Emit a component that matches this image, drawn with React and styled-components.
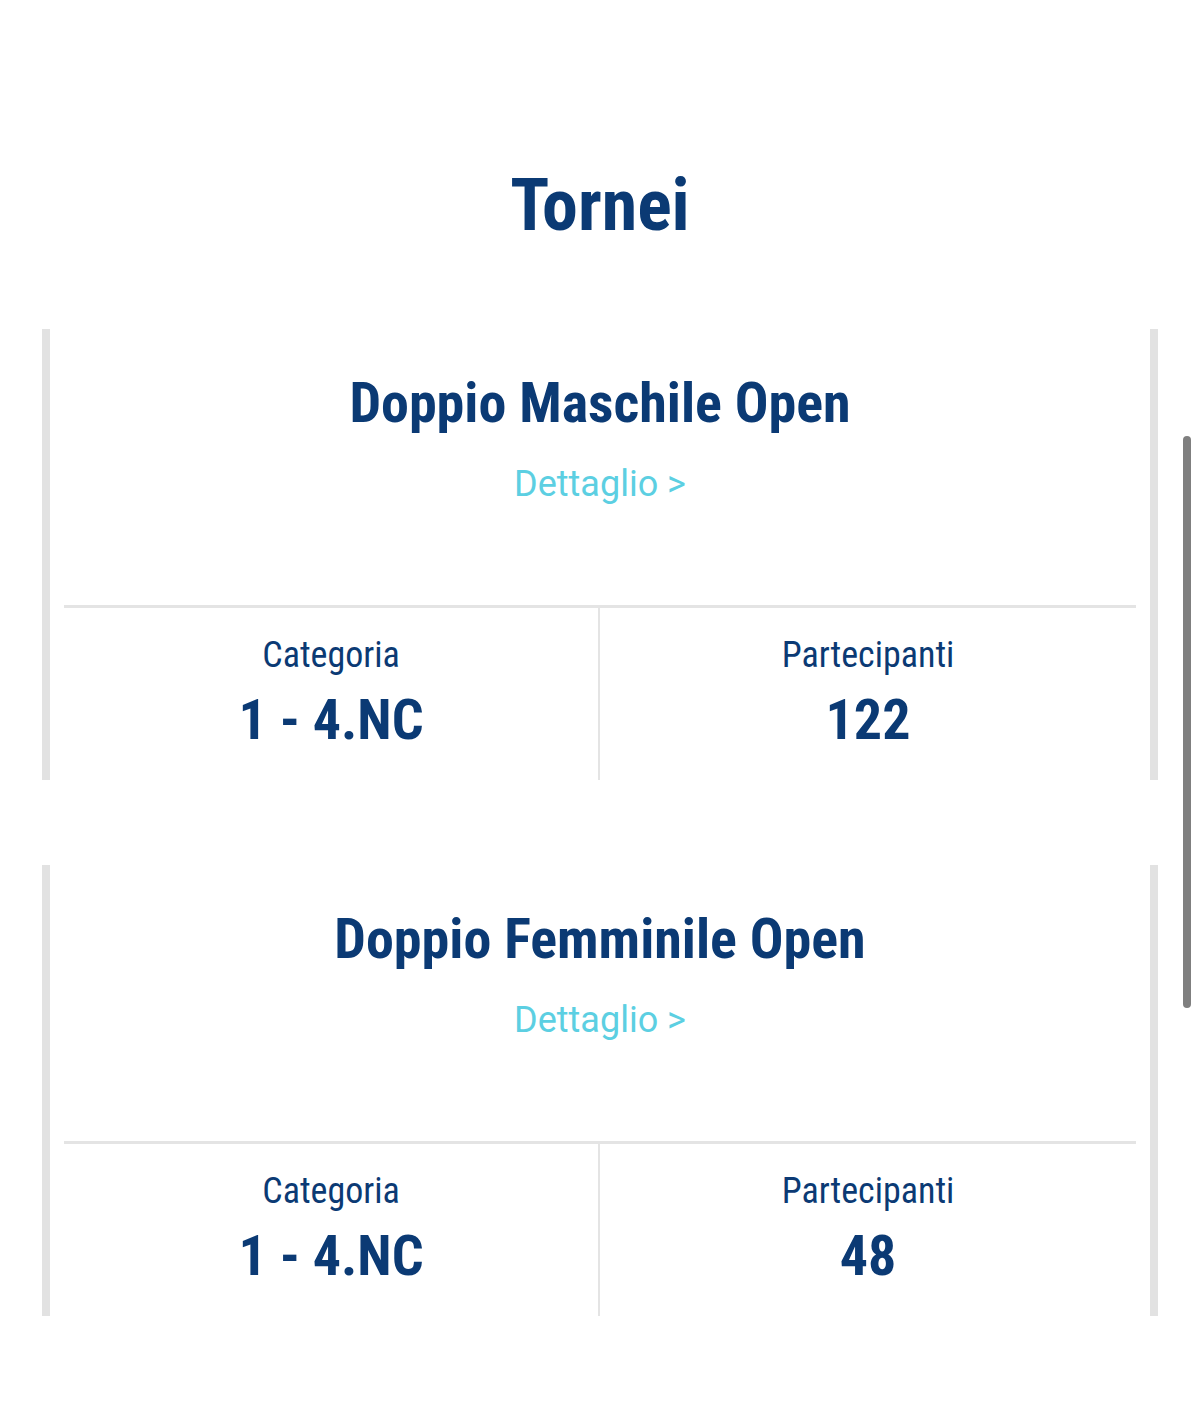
import React from "react";
import styled, { createGlobalStyle } from "styled-components";

const GlobalStyle = createGlobalStyle`
  html, body {
    margin: 0;
    padding: 0;
    background: #fff;
  }
  body {
    font-family: Roboto, "Liberation Sans", sans-serif;
    font-stretch: 75%;
    color: #0b3a74;
  }
`;

const Page = styled.div`
  position: relative;
  width: 1200px;
  min-height: 1420px;
  padding-bottom: 104px;
  box-sizing: border-box;
`;

const Title = styled.h1`
  margin: 0;
  padding-top: 170px;
  padding-bottom: 87px;
  font-size: 72px;
  line-height: 72px;
  font-weight: 700;
  text-align: center;
  color: #0b3a74;
`;

const List = styled.div`
  display: flex;
  flex-direction: column;
  gap: 85px;
  padding: 0 42px;
`;

const Card = styled.div`
  border-left: 8px solid #e2e2e2;
  border-right: 8px solid #e2e2e2;
  height: 451px;
  display: flex;
  flex-direction: column;
  padding: 0 14px;
`;

const CardHead = styled.div`
  flex: 1;
  display: flex;
  flex-direction: column;
  align-items: center;
  padding-top: 42px;
  border-bottom: 3px solid #e4e4e4;
`;

const CardTitle = styled.h2`
  margin: 0;
  font-size: 56px;
  line-height: 64px;
  font-weight: 700;
  color: #0b3a74;
`;

const Detail = styled.a`
  margin-top: 29px;
  font-size: 36px;
  line-height: 40px;
  font-weight: 400;
  font-stretch: 100%;
  color: #5ccfe2;
  text-decoration: none;
`;

const Stats = styled.div`
  height: 172px;
  display: grid;
  grid-template-columns: 1fr 1fr;
`;

const Stat = styled.div`
  display: flex;
  flex-direction: column;
  align-items: center;
  padding-top: 27px;
  border-right: ${(p) => (p.$divided ? "2px solid #e4e4e4" : "none")};
`;

const StatLabel = styled.div`
  font-size: 36px;
  line-height: 40px;
  font-weight: 400;
`;

const StatValue = styled.div`
  margin-top: 15px;
  font-size: 56px;
  line-height: 60px;
  font-weight: 700;
`;

const ScrollThumb = styled.div`
  position: absolute;
  top: 436px;
  left: 1183px;
  width: 8px;
  height: 572px;
  border-radius: 4px;
  background: #7f7f7f;
`;

const tornei = [
  { name: "Doppio Maschile Open", categoria: "1 - 4.NC", partecipanti: 122 },
  { name: "Doppio Femminile Open", categoria: "1 - 4.NC", partecipanti: 48 },
];

export default function App() {
  return (
    <Page>
      <GlobalStyle />
      <Title>Tornei</Title>
      <List>
        {tornei.map((t) => (
          <Card key={t.name}>
            <CardHead>
              <CardTitle>{t.name}</CardTitle>
              <Detail href="#">Dettaglio &gt;</Detail>
            </CardHead>
            <Stats>
              <Stat $divided>
                <StatLabel>Categoria</StatLabel>
                <StatValue>{t.categoria}</StatValue>
              </Stat>
              <Stat>
                <StatLabel>Partecipanti</StatLabel>
                <StatValue>{t.partecipanti}</StatValue>
              </Stat>
            </Stats>
          </Card>
        ))}
      </List>
      <ScrollThumb />
    </Page>
  );
}
